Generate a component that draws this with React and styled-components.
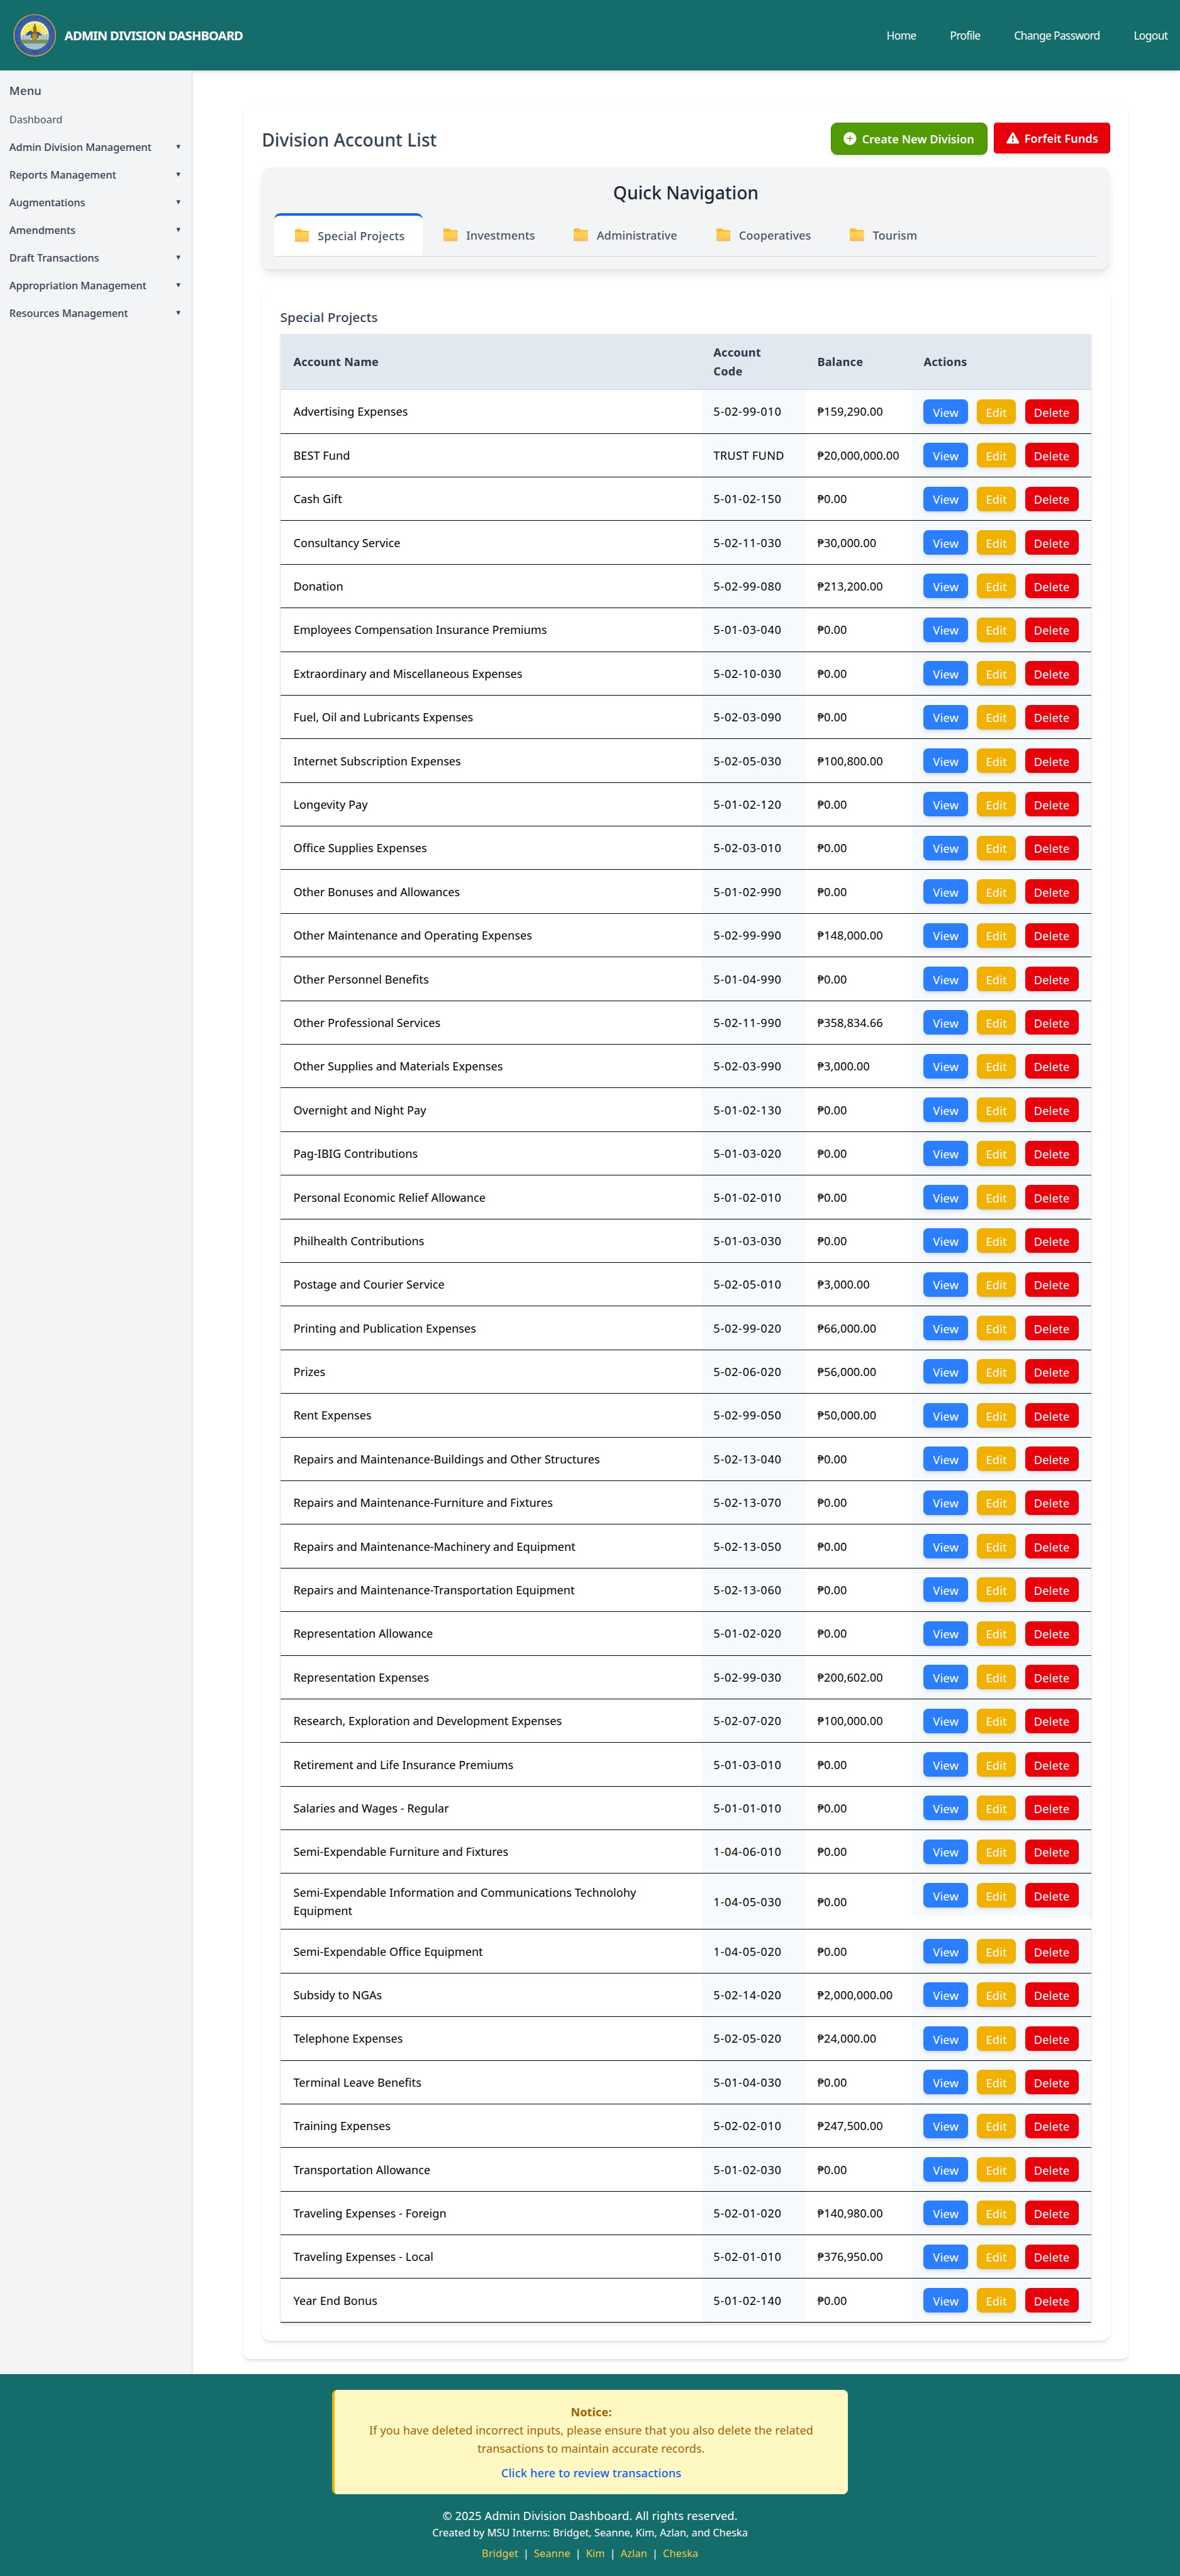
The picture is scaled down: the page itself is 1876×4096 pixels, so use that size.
import React from 'react';
import styled, { createGlobalStyle, css } from 'styled-components';
import { BsPlusCircleFill, BsExclamationTriangleFill } from 'react-icons/bs';

const rem = (n) => `${n / 16}rem`;

const teal = '#146c6b';
const shadowMd = css`
  box-shadow: 0 ${rem(4)} ${rem(6)} -1px rgba(0, 0, 0, 0.1), 0 ${rem(2)} ${rem(4)} -2px rgba(0, 0, 0, 0.1);
`;

const Global = createGlobalStyle`
  html { font-size: 15.633px; }
  body {
    margin: 0;
    background: #fff;
    color: #000;
    font-family: "Noto Sans", "Open Sans", sans-serif;
    font-size: ${rem(18.5)};
    line-height: ${rem(30)};
  }
  *, *::before, *::after { box-sizing: border-box; }
  a { text-decoration: none; color: inherit; }
  h1, h2, h3, p { margin: 0; }
`;

const Page = styled.div`
  display: flex;
  flex-direction: column;
  overflow: hidden;
`;

const Header = styled.header`
  position: relative;
  z-index: 1;
  display: flex;
  align-items: center;
  justify-content: space-between;
  height: ${rem(115)};
  padding: 0 ${rem(20)} 0 ${rem(22)};
  background: ${teal};
  color: #fff;
  ${shadowMd}
`;

const Brand = styled.div`
  display: flex;
  align-items: center;
  gap: ${rem(13)};
  font-size: ${rem(20.6)};
  font-weight: 700;
  letter-spacing: ${rem(-0.8)};
`;

const Seal = styled.svg`
  width: ${rem(70)};
  height: ${rem(70)};
  flex: none;
`;

const TopNav = styled.nav`
  display: flex;
  gap: ${rem(55)};
  font-size: ${rem(17.8)};
  letter-spacing: ${rem(-0.64)};
  padding-top: ${rem(1)};
`;

const Body = styled.div`
  display: flex;
  height: ${rem(3749)};
`;

const Sidebar = styled.aside`
  position: relative;
  z-index: 2;
  width: ${rem(313)};
  flex: none;
  padding: ${rem(16.8)} ${rem(18.5)} 0 ${rem(15.2)};
  background: #f3f4f6;
  border-right: 1px solid #d1d5dc;
`;

const MenuTitle = styled.h3`
  margin-bottom: ${rem(10)};
  font-size: ${rem(18.8)};
  font-weight: 530;
  line-height: ${rem(30)};
  letter-spacing: ${rem(0.2)};
  color: #364153;
`;

const MenuItem = styled.a`
  display: flex;
  align-items: center;
  justify-content: space-between;
  height: ${rem(45)};
  font-size: ${rem(16.8)};
  font-weight: ${(p) => (p.$plain ? 400 : 500)};
  letter-spacing: ${rem(-0.05)};
  color: ${(p) => (p.$plain ? '#4a5565' : '#364153')};
`;

const Caret = styled.span`
  font-family: "DejaVu Sans", sans-serif;
  font-size: ${rem(8.6)};
  letter-spacing: 0;
`;

const Main = styled.main`
  flex: 1;
  padding: ${rem(55)} ${rem(84)} 0 ${rem(83)};
`;

const Card = styled.section`
  padding: ${rem(30)};
  background: #fff;
  border-radius: ${rem(10)};
  ${shadowMd}
`;

const CardHead = styled.div`
  display: flex;
  align-items: flex-start;
  justify-content: space-between;
  height: ${rem(72)};
`;

const PageTitle = styled.h1`
  font-size: ${rem(28.8)};
  font-weight: 530;
  line-height: ${rem(56)};
  letter-spacing: ${rem(0.03)};
  color: #364153;
`;

const HeadActions = styled.div`
  display: flex;
  align-items: flex-start;
  gap: ${rem(10)};
`;

const HeadButton = styled.button`
  display: flex;
  align-items: center;
  height: ${(p) => rem(p.$primary ? 52 : 50)};
  width: ${(p) => rem(p.$primary ? 255 : 189)};
  padding: ${(p) => rem(p.$primary ? 1 : 0)} 0 0 ${(p) => rem(p.$primary ? 19.5 : 20)};
  gap: ${rem(9)};
  border: ${(p) => (p.$primary ? '1px solid #3f7d05' : '0')};
  border-radius: ${(p) => rem(p.$primary ? 10 : 5)};
  background: ${(p) => (p.$primary ? '#529b05' : '#e7000b')};
  color: #fff;
  font: 600 ${rem(18.5)} "Noto Sans", sans-serif;
  letter-spacing: ${rem(0.08)};
  white-space: nowrap;
  ${shadowMd}

  svg {
    width: ${rem(21)};
    height: ${rem(21)};
    flex: none;
    margin-bottom: ${rem(2)};
  }
`;

const QuickNav = styled.section`
  height: ${rem(166)};
  margin-bottom: ${rem(30)};
  padding: ${rem(18)} ${rem(20)} 0;
  background: #f3f4f6;
  border-radius: ${rem(15)};
  box-shadow: 0 ${rem(10)} ${rem(15)} -3px rgba(0, 0, 0, 0.1), 0 ${rem(4)} ${rem(6)} -4px rgba(0, 0, 0, 0.1);
`;

const QuickTitle = styled.h2`
  font-size: ${rem(28.8)};
  font-weight: 530;
  line-height: ${rem(47.5)};
  height: ${rem(57)};
  letter-spacing: ${rem(0)};
  text-align: center;
  color: #1e2939;
`;

const Tabs = styled.div`
  display: flex;
  align-items: stretch;
  height: ${rem(71)};
  border-bottom: 1px solid #d1d5dc;
`;

const Tab = styled.a`
  display: flex;
  align-items: flex-start;
  gap: ${rem(14)};
  padding: ${(p) => (p.$active ? `${rem(18)} ${rem(28.9)} 0 ${rem(34)}` : `${rem(21)} ${rem(29)} 0 ${rem(34.3)}`)};
  border-top: ${(p) => (p.$active ? `${rem(5)} solid #155dfc` : '0')};
  border-radius: ${rem(10)} ${rem(10)} 0 0;
  background: ${(p) => (p.$active ? '#fff' : 'transparent')};
  font-weight: 500;
  letter-spacing: ${(p) => rem(p.$active ? 0.26 : 0.14)};
  color: #4a5565;
`;

const FolderSvg = styled.svg`
  width: ${rem(23)};
  height: ${rem(21)};
  flex: none;
  margin-top: ${rem(4)};
`;

const TableCard = styled.section`
  padding: ${rem(30)};
  background: #fff;
  border-radius: ${rem(15)};
  ${shadowMd}
`;

const TableTitle = styled.h3`
  margin-bottom: ${rem(10)};
  font-size: ${rem(21.2)};
  font-weight: 500;
  line-height: ${rem(35.4)};
  letter-spacing: ${rem(0.08)};
  color: #364153;
`;

const Table = styled.div`
  ${shadowMd}
`;

const Row = styled.div`
  display: grid;
  grid-template-columns: ${rem(685)} ${rem(169)} ${rem(173)} 1fr;
  min-height: ${(p) => rem(p.$tall ? 91 : 71)};
  border-bottom: 1px solid #000;
`;

const HeadRow = styled(Row)`
  min-height: ${rem(91.4)};
  border-bottom-color: #cbd5e1;
  background: #e2e8f0;
  color: #2d3748;
  font-weight: 700;
  letter-spacing: ${rem(0.28)};
`;

const Cell = styled.div`
  display: flex;
  align-items: center;
  padding: ${rem(1.6)} ${rem(20)} 0;
  background: ${(p) => (p.$tint ? '#f7fafc' : 'transparent')};
  letter-spacing: ${(p) => (p.$spacing ? rem(p.$spacing) : 'inherit')};
`;

const NameCell = styled(Cell)`
  padding-left: ${rem(20.5)};
  border-left: 1px solid #e5e9ef;
  background: #fff;
`;

const HeadNameCell = styled(Cell)`
  padding-left: ${rem(21.5)};
`;

const ActionCell = styled.div`
  display: flex;
  align-self: start;
  gap: ${rem(15)};
  height: ${rem(70)};
  padding: ${rem(15)} ${rem(20)};
  background: #f7fafc;
  border-right: 1px solid #e5e9ef;
`;

const tones = {
  View: { color: '#2b7fff', width: 72 },
  Edit: { color: '#f0b100', width: 63 },
  Delete: { color: '#e7000b', width: 87 },
};

const ActionButton = styled.button`
  width: ${(p) => rem(tones[p.$kind].width)};
  height: ${rem(40)};
  padding: ${rem(1.4)} 0 0;
  border: 0;
  border-radius: ${rem(8)};
  background: ${(p) => tones[p.$kind].color};
  color: #fff;
  font: 400 ${rem(18.7)} "Noto Sans", sans-serif;
  letter-spacing: ${rem(0.22)};
  ${shadowMd}
`;

const Footer = styled.footer`
  position: relative;
  display: flex;
  flex-direction: column;
  align-items: center;
  height: ${rem(329)};
  padding-top: ${rem(25)};
  background: ${teal};
  color: #fff;
  letter-spacing: ${rem(0.19)};
`;

const Notice = styled.div`
  width: ${rem(840)};
  height: ${rem(170)};
  margin-bottom: ${rem(22)};
  padding: ${rem(21.5)} ${rem(50)} 0;
  border-left: ${rem(5)} solid #f0b100;
  border-radius: ${rem(8)};
  background: #fef9c2;
  color: #a65f00;
  letter-spacing: ${rem(0.11)};
  text-align: center;
`;

const NoticeLink = styled.a`
  display: block;
  margin-top: ${rem(10)};
  font-weight: 550;
  letter-spacing: ${rem(0.22)};
  color: #155dfc;
`;

const Copyright = styled.p`
  line-height: ${rem(27.4)};
`;

const Credits = styled.p`
  font-size: ${rem(16.8)};
  line-height: ${rem(27)};
  letter-spacing: ${rem(0.01)};
`;

const Authors = styled.div`
  display: flex;
  gap: ${rem(8)};
  margin-top: ${rem(4.5)};
  font-size: ${rem(16.8)};
  letter-spacing: ${rem(0.15)};

  a {
    color: #ecc94b;
  }
`;

const menu = [
  'Admin Division Management',
  'Reports Management',
  'Augmentations',
  'Amendments',
  'Draft Transactions',
  'Appropriation Management',
  'Resources Management',
];

const tabs = ['Special Projects', 'Investments', 'Administrative', 'Cooperatives', 'Tourism'];

const accounts = [
  ['Advertising Expenses', '5-02-99-010', '159,290.00'],
  ['BEST Fund', 'TRUST FUND', '20,000,000.00'],
  ['Cash Gift', '5-01-02-150', '0.00'],
  ['Consultancy Service', '5-02-11-030', '30,000.00'],
  ['Donation', '5-02-99-080', '213,200.00'],
  ['Employees Compensation Insurance Premiums', '5-01-03-040', '0.00'],
  ['Extraordinary and Miscellaneous Expenses', '5-02-10-030', '0.00'],
  ['Fuel, Oil and Lubricants Expenses', '5-02-03-090', '0.00'],
  ['Internet Subscription Expenses', '5-02-05-030', '100,800.00'],
  ['Longevity Pay', '5-01-02-120', '0.00'],
  ['Office Supplies Expenses', '5-02-03-010', '0.00'],
  ['Other Bonuses and Allowances', '5-01-02-990', '0.00'],
  ['Other Maintenance and Operating Expenses', '5-02-99-990', '148,000.00'],
  ['Other Personnel Benefits', '5-01-04-990', '0.00'],
  ['Other Professional Services', '5-02-11-990', '358,834.66'],
  ['Other Supplies and Materials Expenses', '5-02-03-990', '3,000.00'],
  ['Overnight and Night Pay', '5-01-02-130', '0.00'],
  ['Pag-IBIG Contributions', '5-01-03-020', '0.00'],
  ['Personal Economic Relief Allowance', '5-01-02-010', '0.00'],
  ['Philhealth Contributions', '5-01-03-030', '0.00'],
  ['Postage and Courier Service', '5-02-05-010', '3,000.00'],
  ['Printing and Publication Expenses', '5-02-99-020', '66,000.00'],
  ['Prizes', '5-02-06-020', '56,000.00'],
  ['Rent Expenses', '5-02-99-050', '50,000.00'],
  ['Repairs and Maintenance-Buildings and Other Structures', '5-02-13-040', '0.00'],
  ['Repairs and Maintenance-Furniture and Fixtures', '5-02-13-070', '0.00'],
  ['Repairs and Maintenance-Machinery and Equipment', '5-02-13-050', '0.00'],
  ['Repairs and Maintenance-Transportation Equipment', '5-02-13-060', '0.00'],
  ['Representation Allowance', '5-01-02-020', '0.00'],
  ['Representation Expenses', '5-02-99-030', '200,602.00'],
  ['Research, Exploration and Development Expenses', '5-02-07-020', '100,000.00'],
  ['Retirement and Life Insurance Premiums', '5-01-03-010', '0.00'],
  ['Salaries and Wages - Regular', '5-01-01-010', '0.00'],
  ['Semi-Expendable Furniture and Fixtures', '1-04-06-010', '0.00'],
  ['Semi-Expendable Information and Communications Technolohy Equipment', '1-04-05-030', '0.00', true],
  ['Semi-Expendable Office Equipment', '1-04-05-020', '0.00'],
  ['Subsidy to NGAs', '5-02-14-020', '2,000,000.00'],
  ['Telephone Expenses', '5-02-05-020', '24,000.00'],
  ['Terminal Leave Benefits', '5-01-04-030', '0.00'],
  ['Training Expenses', '5-02-02-010', '247,500.00'],
  ['Transportation Allowance', '5-01-02-030', '0.00'],
  ['Traveling Expenses - Foreign', '5-02-01-020', '140,980.00'],
  ['Traveling Expenses - Local', '5-02-01-010', '376,950.00'],
  ['Year End Bonus', '5-01-02-140', '0.00'],
];

const authors = ['Bridget', 'Seanne', 'Kim', 'Azlan', 'Cheska'];

const rays = Array.from({ length: 13 }, (_, i) => {
  const a = Math.PI * (1.02 + (0.96 * i) / 12);
  const w = 0.075;
  const pt = (t, r) => `${(35 + r * Math.cos(t)).toFixed(2)},${(35 + r * Math.sin(t)).toFixed(2)}`;
  return `35,35 ${pt(a - w, 20.5)} ${pt(a + w, 20.5)}`;
});

function CitySeal() {
  return (
    <Seal viewBox="0 0 70 70" role="img" aria-label="City seal">
      <defs>
        <clipPath id="seal-inner"><circle cx="35" cy="35" r="22.8" /></clipPath>
        <path id="seal-ring" d="M22.5 60.2 A28.2 28.2 0 1 1 47.5 60.2" />
        <path id="seal-base" d="M27.5 63.6 Q35 65.6 42.5 63.6" />
      </defs>
      <circle cx="35" cy="35" r="34.6" fill="#d9a93a" />
      <circle cx="35" cy="35" r="33.1" fill="#3c60a6" />
      <g fill="#24508a" fontFamily="Liberation Serif, serif" fontWeight="700" fontSize="6.6" letterSpacing="0">
        <text textLength="143" lengthAdjust="spacing"><textPath href="#seal-ring">THE SEAL OF THE CITY OF GENERAL SANTOS</textPath></text>
        <text fontSize="6"><textPath href="#seal-base">1968</textPath></text>
      </g>
      <circle cx="35" cy="35" r="23.4" fill="#8fa860" />
      <g clipPath="url(#seal-inner)">
        <rect x="12" y="12" width="46" height="46" fill="#fbf7cf" />
        {rays.map((points) => <polygon key={points} points={points} fill="#f4dc1f" />)}
        <circle cx="35" cy="32" r="9.5" fill="#f2d922" />
        <path d="M15 40 L20 34 L24 30 L28 27.5 L31 29 L34 31 L38 29 L42 30 L47 34 L54 40 Z" fill="#2c559c" />
        <path d="M12 35h5v-2h4v2h4v-1h4v9H12zM41 35h5v-2h4v1h3v-2h5v11H41z" fill="#c3c6cc" />
        <path d="M17 35v8M21 35v8M25 35v8M46 35v8M50 35v8M54 35v8" stroke="#8b919b" strokeWidth="0.7" />
        <path d="M34 16h2l.6 4 1.6 3-.8 4 1 6h-6.6l1-6-.6-5 1.4-2z" fill="#8d6a1f" />
        <rect x="31" y="32.5" width="8" height="10" fill="#c98a1c" />
        <rect x="12" y="42" width="46" height="4.4" fill="#4f9c58" />
        <path d="M12 43.2h46" stroke="#8cc07a" strokeWidth="0.8" strokeDasharray="2 1.4" />
        <rect x="12" y="45.6" width="46" height="2.6" fill="#b79a4a" />
        <path d="M12 46.9h46" stroke="#6b5a2c" strokeWidth="1.2" strokeDasharray="1.2 1" />
        <rect x="12" y="48" width="46" height="11" fill="#7fb2d8" />
        <path d="M14 50h42M16 52.4h38M19 54.8h32M24 57h22" stroke="#e6eef2" strokeWidth="0.9" strokeDasharray="3 1.6" />
        <path d="M15 51.2h40M18 53.6h34" stroke="#d6b765" strokeWidth="0.7" strokeDasharray="2.4 2.6" />
      </g>
    </Seal>
  );
}

function Folder() {
  return (
    <FolderSvg viewBox="0 0 23 21" aria-hidden="true">
      <defs>
        <linearGradient id="folder-front" x1="0" y1="0" x2="0" y2="1">
          <stop offset="0" stopColor="#ffd84f" />
          <stop offset="0.5" stopColor="#ffcd57" />
          <stop offset="1" stopColor="#ffb35f" />
        </linearGradient>
      </defs>
      <path d="M0 1.6Q0 .2 1.4.2H8.6Q9.5.2 10.1.8L12.2 2.9H21.6Q23 2.9 23 4.3V10H0Z" fill="#fdb93c" />
      <path d="M0 6.6Q0 6 .8 6H9.4L11 5H22.2Q23 5 23 5.8V19.6Q23 21 21.6 21H1.4Q0 21 0 19.6Z" fill="url(#folder-front)" />
    </FolderSvg>
  );
}

function AccountRow({ name, code, balance, tall }) {
  return (
    <Row $tall={tall}>
      <NameCell $spacing={0.07}>{name}</NameCell>
      <Cell $tint $spacing={code.startsWith('T') ? 0.4 : 0.76}>{code}</Cell>
      <Cell $spacing={0.16}>₱{balance}</Cell>
      <ActionCell>
        {Object.keys(tones).map((kind) => (
          <ActionButton key={kind} $kind={kind}>{kind}</ActionButton>
        ))}
      </ActionCell>
    </Row>
  );
}

export default function App() {
  return (
    <Page>
      <Global />
      <Header>
        <Brand>
          <CitySeal />
          ADMIN DIVISION DASHBOARD
        </Brand>
        <TopNav>
          {['Home', 'Profile', 'Change Password', 'Logout'].map((t) => <a key={t}>{t}</a>)}
        </TopNav>
      </Header>
      <Body>
        <Sidebar>
          <MenuTitle>Menu</MenuTitle>
          <MenuItem $plain>Dashboard</MenuItem>
          {menu.map((label) => (
            <MenuItem key={label}>{label}<Caret>▼</Caret></MenuItem>
          ))}
        </Sidebar>
        <Main>
          <Card>
            <CardHead>
              <PageTitle>Division Account List</PageTitle>
              <HeadActions>
                <HeadButton $primary><BsPlusCircleFill />Create New Division</HeadButton>
                <HeadButton><BsExclamationTriangleFill />Forfeit Funds</HeadButton>
              </HeadActions>
            </CardHead>
            <QuickNav>
              <QuickTitle>Quick Navigation</QuickTitle>
              <Tabs>
                {tabs.map((label, i) => (
                  <Tab key={label} $active={i === 0}><Folder />{label}</Tab>
                ))}
              </Tabs>
            </QuickNav>
            <TableCard>
              <TableTitle>Special Projects</TableTitle>
              <Table>
                <HeadRow>
                  <HeadNameCell>Account Name</HeadNameCell>
                  <Cell>Account Code</Cell>
                  <Cell>Balance</Cell>
                  <Cell>Actions</Cell>
                </HeadRow>
                {accounts.map(([name, code, balance, tall]) => (
                  <AccountRow key={name} name={name} code={code} balance={balance} tall={tall} />
                ))}
              </Table>
            </TableCard>
          </Card>
        </Main>
      </Body>
      <Footer>
        <Notice>
          <strong>Notice:</strong>
          <p>If you have deleted incorrect inputs, please ensure that you also delete the related transactions to maintain accurate records.</p>
          <NoticeLink>Click here to review transactions</NoticeLink>
        </Notice>
        <Copyright>© 2025 Admin Division Dashboard. All rights reserved.</Copyright>
        <Credits>Created by MSU Interns: Bridget, Seanne, Kim, Azlan, and Cheska</Credits>
        <Authors>
          {authors.map((name, i) => (
            <React.Fragment key={name}>
              {i > 0 && <span>|</span>}
              <a>{name}</a>
            </React.Fragment>
          ))}
        </Authors>
      </Footer>
    </Page>
  );
}
